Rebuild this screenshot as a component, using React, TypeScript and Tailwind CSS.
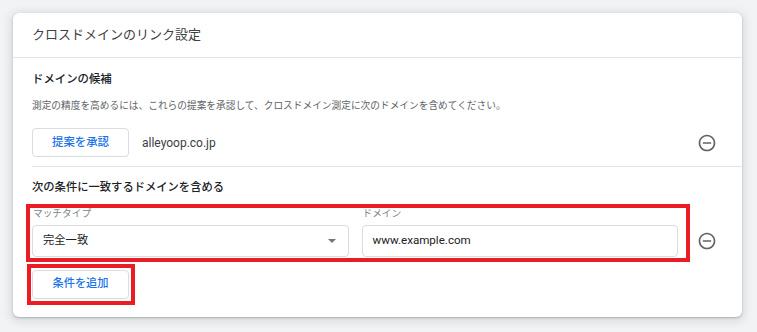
import React from "react";

const font = { fontFamily: 'Roboto, "Noto Sans CJK JP", sans-serif' };

function MinusCircle() {
  return (
    <svg width="20" height="20" viewBox="0 0 24 24" fill="#5f6368">
      <path d="M7 11v2h10v-2H7zm5-9C6.48 2 2 6.48 2 12s4.48 10 10 10 10-4.48 10-10S17.52 2 12 2zm0 18c-4.41 0-8-3.59-8-8s3.59-8 8-8 8 3.59 8 8-3.59 8-8 8z" />
    </svg>
  );
}

export default function App() {
  return (
    <div className="w-[757px] h-[332px] bg-[#f1f3f4] pt-[13px] pl-[13px] overflow-hidden" style={font}>
      <div className="relative w-[729px] h-[304px] bg-white rounded-[6px] shadow-[0_1px_2px_rgba(60,64,67,0.3),0_2px_8px_3px_rgba(60,64,67,0.12)]">
        {/* header */}
        <div className="h-[45px] border-b border-[#e3e3e3] pl-[19px] flex items-center">
          <span className="text-[13px] text-[#3c4043] leading-[16px]">クロスドメインのリンク設定</span>
        </div>

        {/* section 1 */}
        <div className="pl-[19px]">
          <div className="pt-[13px] pb-[9px] pr-[25px]">
            <div className="text-[11.4px] font-medium text-[#202124] leading-[16px]">ドメインの候補</div>
            <div className="mt-[12px] text-[9.7px] text-[#5f6368] leading-[14px] whitespace-nowrap">
              測定の精度を高めるには、これらの提案を承認して、クロスドメイン測定に次のドメインを含めてください。
            </div>
            <div className="mt-[15px] flex items-center">
              <button className="w-[97px] h-[29px] border border-[#dadce0] rounded-[4px] text-[11.4px] font-medium text-[#1a73e8] flex items-center justify-center">
                提案を承認
              </button>
              <span className="ml-[13px] text-[12px] text-[#3c4043]">alleyoop.co.jp</span>
              <div className="flex-1" />
              <MinusCircle />
            </div>
          </div>
          <div className="h-px bg-[#e3e3e3]" />

          {/* section 2 */}
          <div className="pt-[13px] pr-[25px]">
            <div className="text-[11.3px] font-medium text-[#202124] leading-[16px]">次の条件に一致するドメインを含める</div>
            <div className="mt-[12px] flex items-end">
              <div className="w-[646px] grid grid-cols-2 gap-x-[13px]">
                <div>
                  <div className="text-[9.7px] text-[#80868b] leading-[12px] ml-[1px]">マッチタイプ</div>
                  <div className="mt-[5px] h-[32px] border border-[#dadce0] rounded-[4px] flex items-center pl-[10px] pr-[12px]">
                    <span className="text-[11.3px] text-[#202124]">完全一致</span>
                    <div className="flex-1" />
                    <svg width="8" height="4" viewBox="0 0 8 4">
                      <path d="M0 0 L8 0 L4 4 Z" fill="#757575" />
                    </svg>
                  </div>
                </div>
                <div>
                  <div className="text-[9.7px] text-[#80868b] leading-[12px] ml-[1px]">ドメイン</div>
                  <div className="mt-[5px] h-[32px] border border-[#dadce0] rounded-[4px] flex items-center pl-[10px]">
                    <span className="text-[11.6px] text-[#202124]">www.example.com</span>
                  </div>
                </div>
              </div>
              <div className="ml-[19px] h-[32px] flex items-center">
                <MinusCircle />
              </div>
            </div>
            <button className="mt-[13px] w-[97px] h-[29px] border border-[#dadce0] rounded-[4px] text-[11.2px] font-medium text-[#1a73e8] flex items-center justify-center">
              条件を追加
            </button>
          </div>
        </div>

        {/* red highlight frames */}
        <div className="absolute left-[13px] top-[191px] w-[664px] h-[58px] border-[4px] border-[#ec1c24] pointer-events-none" />
        <div className="absolute left-[14px] top-[251px] w-[108px] h-[41px] border-[4px] border-[#ec1c24] pointer-events-none" />
      </div>
    </div>
  );
}
